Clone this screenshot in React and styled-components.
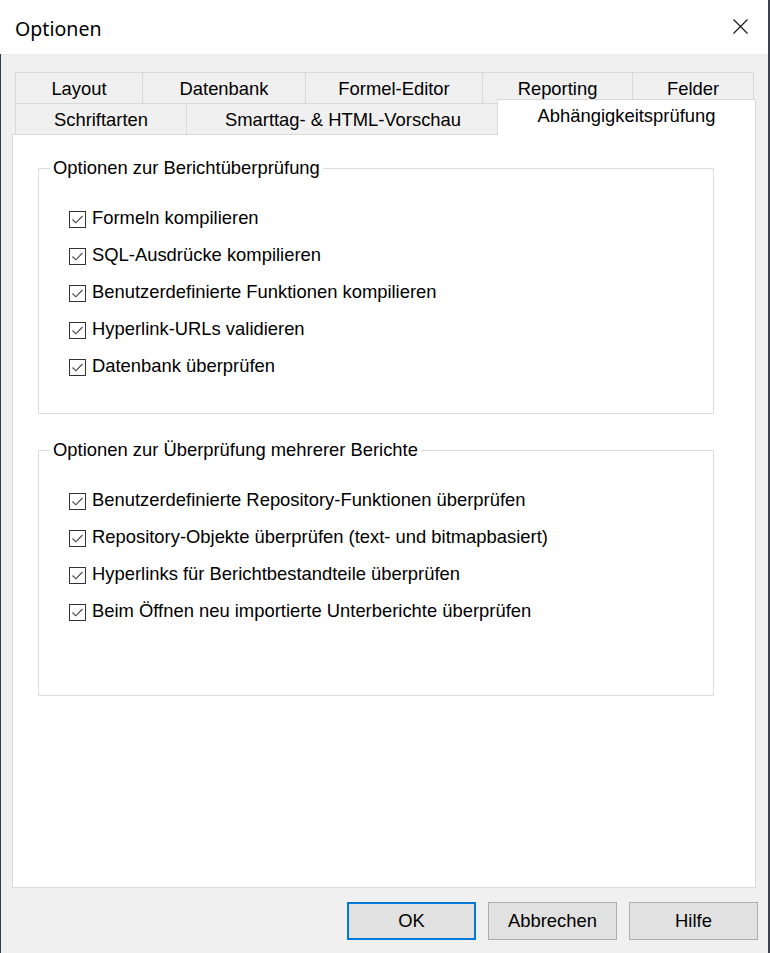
import React from "react";
import styled, { createGlobalStyle } from "styled-components";

const GlobalStyle = createGlobalStyle`
	html, body {
		margin: 0;
		padding: 0;
		background: #f0f0f0;
	}
	* {
		box-sizing: border-box;
	}
`;

const rowOne = [
	{ label: "Layout", w: 127 },
	{ label: "Datenbank", w: 163 },
	{ label: "Formel-Editor", w: 177 },
	{ label: "Reporting", w: 150 },
	{ label: "Felder", w: 122, last: true },
];

const rowTwo = [
	{ label: "Schriftarten", w: 171 },
	{ label: "Smarttag- & HTML-Vorschau", w: 313 },
];

const groups = [
	{
		title: "Optionen zur Berichtüberprüfung",
		items: [
			"Formeln kompilieren",
			"SQL-Ausdrücke kompilieren",
			"Benutzerdefinierte Funktionen kompilieren",
			"Hyperlink-URLs validieren",
			"Datenbank überprüfen",
		],
	},
	{
		title: "Optionen zur Überprüfung mehrerer Berichte",
		items: [
			"Benutzerdefinierte Repository-Funktionen überprüfen",
			"Repository-Objekte überprüfen (text- und bitmapbasiert)",
			"Hyperlinks für Berichtbestandteile überprüfen",
			"Beim Öffnen neu importierte Unterberichte überprüfen",
		],
	},
];

const Check = () => (
	<CheckBox>
		<svg width="15" height="15" viewBox="0 0 15 15">
			<polyline
				points="2.5,7.5 5.8,10.8 12.5,4"
				fill="none"
				stroke="#444"
				strokeWidth="1.1"
			/>
		</svg>
	</CheckBox>
);

const App = () => {
	return (
		<Window>
			<GlobalStyle />
			<TitleBar>
				<Title>Optionen</Title>
				<Close>
					<svg width="15" height="15" viewBox="0 0 15 15">
						<path d="M0.5 0.5 L14.5 14.5 M14.5 0.5 L0.5 14.5" stroke="#111" strokeWidth="1.1" />
					</svg>
				</Close>
			</TitleBar>
			<Body>
				<Tabs>
					<TabRow>
						{rowOne.map((t) => (
							<Tab key={t.label} w={t.w} last={t.last}>
								{t.label}
							</Tab>
						))}
					</TabRow>
					<TabRow>
						{rowTwo.map((t) => (
							<Tab key={t.label} w={t.w}>
								{t.label}
							</Tab>
						))}
						<ActiveTab>Abhängigkeitsprüfung</ActiveTab>
					</TabRow>
				</Tabs>
				<Panel>
					{groups.map((g) => (
						<Group key={g.title}>
							<Legend>{g.title}</Legend>
							<List>
								{g.items.map((item) => (
									<Row key={item}>
										<Check />
										<Label>{item}</Label>
									</Row>
								))}
							</List>
						</Group>
					))}
				</Panel>
				<Buttons>
					<Button primary>OK</Button>
					<Button>Abbrechen</Button>
					<Button>Hilfe</Button>
				</Buttons>
			</Body>
		</Window>
	);
};

export default App;

const Window = styled.div`
	width: 770px;
	height: 953px;
	display: flex;
	flex-direction: column;
	border-right: 2px solid #3a414d;
	background: #f0f0f0;
	font-family: "Liberation Sans", Arial, sans-serif;
	color: #000;
	overflow: hidden;
`;

const TitleBar = styled.div`
	height: 54px;
	flex: none;
	background: #fff;
	display: flex;
	align-items: center;
	justify-content: space-between;
	padding: 2px 20px 0 15px;
`;

const Title = styled.div`
	font-family: "Noto Sans", "Open Sans", sans-serif;
	font-size: 19.6px;
	color: #000;
`;

const Close = styled.div`
	width: 15px;
	height: 15px;
	margin-top: -3px;
	display: flex;
`;

const Body = styled.div`
	flex: 1;
	border-left: 1px solid #2e3c50;
	padding: 18px 12px 0 11px;
	display: flex;
	flex-direction: column;
`;

const Tabs = styled.div`
	padding-left: 3px;
	display: flex;
	flex-direction: column;
`;

const TabRow = styled.div`
	display: flex;
	align-items: flex-end;
	height: 31px;
`;

const Tab = styled.div`
	width: ${({ w }) => w}px;
	height: 31px;
	flex: none;
	border-top: 1px solid #d9d9d9;
	border-left: 1px solid #d9d9d9;
	border-right: ${({ last }) => (last ? "1px solid #d9d9d9" : "none")};
	background: #f0f0f0;
	display: flex;
	align-items: center;
	justify-content: center;
	font-size: 18.4px;
	padding-top: 1px;
`;

const ActiveTab = styled.div`
	position: relative;
	z-index: 2;
	width: 259px;
	height: 36px;
	flex: none;
	margin-left: -2px;
	margin-bottom: -1px;
	background: #fff;
	border: 1px solid #d9d9d9;
	border-bottom: none;
	display: flex;
	align-items: center;
	justify-content: center;
	font-size: 18.4px;
	padding-bottom: 3px;
`;

const Panel = styled.div`
	width: 744px;
	height: 754px;
	flex: none;
	background: #fff;
	border: 1px solid #d9d9d9;
	padding: 22px 0 0 25px;
	display: flex;
	flex-direction: column;
	gap: 25px;
`;

const Group = styled.fieldset`
	margin: 0;
	padding: 0;
	width: 676px;
	height: 257px;
	border: 1px solid #dcdcdc;
`;

const Legend = styled.legend`
	margin-left: 11px;
	padding: 0 3px;
	font-size: 18.4px;
	line-height: 22px;
`;

const List = styled.div`
	padding: 20px 0 0 30px;
	display: flex;
	flex-direction: column;
`;

const Row = styled.div`
	height: 37px;
	display: flex;
	align-items: center;
	gap: 6px;
`;

const CheckBox = styled.div`
	width: 17px;
	height: 17px;
	flex: none;
	border: 1px solid #333;
	background: #fff;
	display: flex;
	align-items: center;
	justify-content: center;
	margin-top: 3px;
`;

const Label = styled.span`
	font-size: 18.4px;
`;

const Buttons = styled.div`
	display: flex;
	justify-content: flex-end;
	gap: 12px;
	margin-top: 14px;
	margin-right: -2px;
`;

const Button = styled.button`
	width: 129px;
	height: 38px;
	background: #e1e1e1;
	border: ${({ primary }) => (primary ? "2px solid #0078d7" : "1px solid #adadad")};
	font-family: "Liberation Sans", Arial, sans-serif;
	font-size: 18.4px;
	color: #000;
	padding: 0;
`;
